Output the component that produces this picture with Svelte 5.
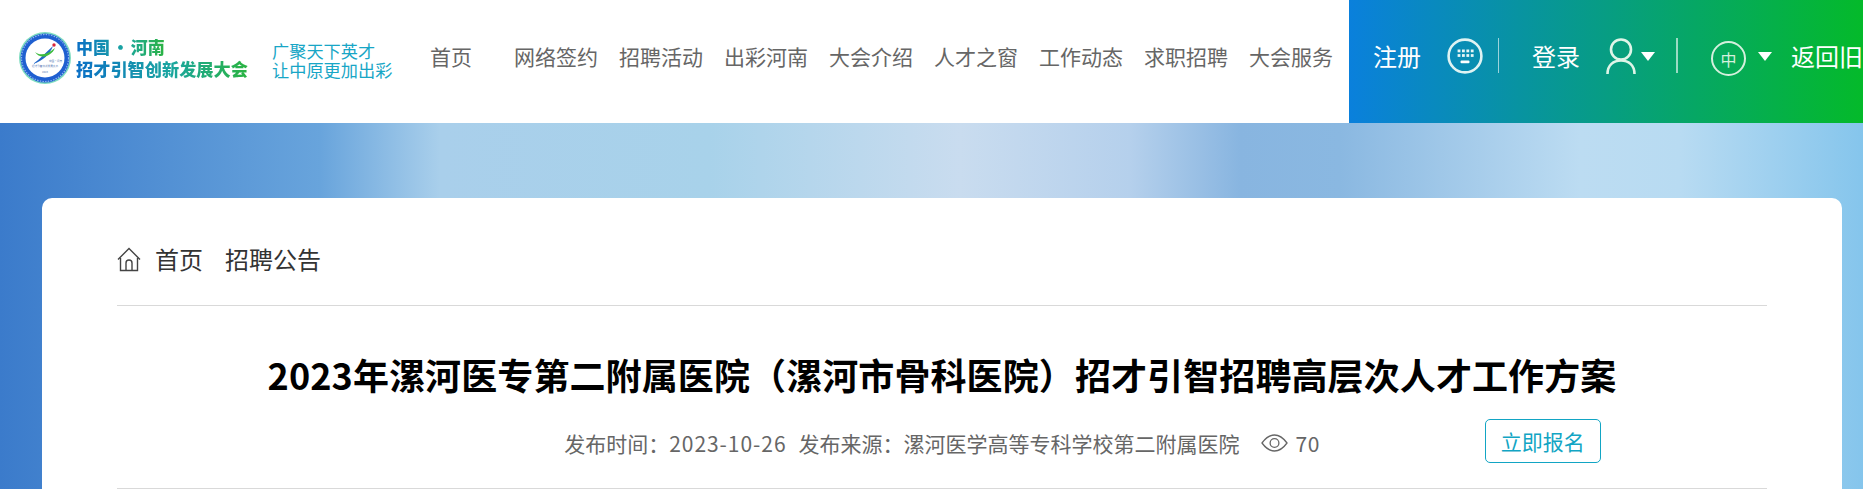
<script lang="ts">
  const navItems = ['网络签约', '招聘活动', '出彩河南', '大会介绍', '人才之窗', '工作动态', '求职招聘', '大会服务'];
  const keypadDots = [0, 1, 2, 3].flatMap((c) => [0, 1].map((r) => ({ x: 10.6 + c * 4.4, y: 11.5 + r * 4.6 })));
</script>

<div class="page">
  <header class="header">
    <a class="logo" href="#top">
      <svg class="emblem" viewBox="0 0 54 54" width="54" height="54" aria-hidden="true">
        <circle cx="27" cy="27" r="26" fill="#7fdcc0" />
        <circle cx="27" cy="27" r="24.5" fill="#1f5fd0" />
        <circle cx="27" cy="27" r="23.5" fill="none" stroke="#8fb4ee" stroke-width="1.2" stroke-dasharray="1.5 1.2" />
        <circle cx="27" cy="27" r="19.5" fill="#fff" />
        <path d="M15 33 C22 28 28 21 35 15 C32 23 25 30 15 33 Z" fill="#2368c9" />
        <path d="M17 21 C22 25 29 24 37 17 C33 26 22 29 17 21 Z" fill="#3dbb3f" />
        <circle cx="36" cy="14" r="1.7" fill="#d9263a" />
        <text x="31" y="31" class="tiny">中国·河南</text>
        <text x="27" y="36" class="tiny center">招才引智创新发展大会</text>
        <text x="27" y="42" class="tiny center">2023</text>
      </svg>
      <span class="logo-text">
        <span class="logo-line1">中国 · 河南</span>
        <span class="logo-line2">招才引智创新发展大会</span>
      </span>
    </a>

    <div class="slogan">
      <div>广聚天下英才</div>
      <div>让中原更加出彩</div>
    </div>

    <nav class="nav">
      <a class="home" href="#top">首页</a>
      {#each navItems as item}
        <a href="#top">{item}</a>
      {/each}
    </nav>

    <div class="account">
      <a class="reg" href="#top">注册</a>
      <svg class="icon-keypad" viewBox="0 0 36 36" width="36" height="36" aria-hidden="true">
        <circle cx="18" cy="18" r="16.4" fill="none" stroke="#dff3f3" stroke-width="2.6" />
        {#each keypadDots as d}
          <rect x={d.x} y={d.y} width="2.8" height="2.8" fill="#e6f6f6" />
        {/each}
        <rect x="13.5" y="22.5" width="9" height="2.8" rx="1" fill="#fff" />
      </svg>
      <span class="divider first"></span>
      <a class="login" href="#top">登录</a>
      <svg class="icon-user" viewBox="0 0 30 36" width="30" height="36" aria-hidden="true">
        <circle cx="15" cy="11.5" r="10" fill="none" stroke="#dff5e8" stroke-width="2.6" />
        <path d="M1.5 36 C1.5 27 7.5 22.5 15 22.5 C22.5 22.5 28.5 27 28.5 36" fill="none" stroke="#dff5e8" stroke-width="2.6" />
      </svg>
      <span class="caret"></span>
      <span class="divider second"></span>
      <span class="lang">中</span>
      <span class="caret lang-caret"></span>
      <a class="old" href="#top">返回旧版</a>
    </div>
  </header>

  <main class="card">
    <div class="crumbs">
      <svg class="icon-home" viewBox="0 0 24 25" width="24" height="25" aria-hidden="true">
        <path d="M1 12.5 L12 1.5 L23 12.5" fill="none" stroke="#444" stroke-width="1.4" />
        <path d="M3.5 11 V23.5 H20.5 V11" fill="none" stroke="#444" stroke-width="1.4" />
        <path d="M9 23.5 V16 A3 3 0 0 1 15 16 V23.5" fill="none" stroke="#444" stroke-width="1.4" />
      </svg>
      <a href="#top">首页</a>
      <a href="#top">招聘公告</a>
    </div>

    <div class="article-head">
      <h1>2023年漯河医专第二附属医院（漯河市骨科医院）招才引智招聘高层次人才工作方案</h1>
      <div class="meta-row">
        <div class="meta">
          <span>发布时间：<span class="num">2023-10-26</span></span>
          <span>发布来源：漯河医学高等专科学校第二附属医院</span>
          <span class="views">
            <svg viewBox="0 0 27 18" width="27" height="18" aria-hidden="true">
              <path d="M1 9 C5 3.5 9 1 13.5 1 C18 1 22 3.5 26 9 C22 14.5 18 17 13.5 17 C9 17 5 14.5 1 9 Z" fill="none" stroke="#666" stroke-width="1.3" />
              <circle cx="13.5" cy="9" r="4.4" fill="none" stroke="#666" stroke-width="1.3" />
            </svg>
            <span class="count">70</span>
          </span>
        </div>
        <a class="apply" href="#top">立即报名</a>
      </div>
    </div>
  </main>
</div>

<style>
  :global(body) {
    margin: 0;
    overflow: hidden;
  }

  .page {
    height: 489px;
    overflow: hidden;
    font-family: "Noto Sans CJK SC", "Noto Sans", sans-serif;
    background: linear-gradient(90deg, #3b7bcb 0, #68a4dc 320px, #a9cfeb 440px, #a8d2ea 710px, #c9dcef 960px, #b5d0ec 1130px, #88b5e0 1240px, #8ab8e1 1340px, #bcdcf2 1580px, #b8dbf2 1680px, #85c5ec 1863px) no-repeat;
  }

  a {
    color: inherit;
    text-decoration: none;
  }

  .header {
    display: flex;
    height: 123px;
    background: #fff;
  }

  .logo {
    display: flex;
    align-items: center;
    gap: 4px;
    margin-left: 18px;
    padding-bottom: 8px;
    width: 254px;
    flex-shrink: 0;
  }

  .emblem {
    flex-shrink: 0;
  }

  .tiny {
    font-size: 2.6px;
    fill: #4a6fb0;
  }

  .center {
    text-anchor: middle;
  }

  .logo-text {
    display: flex;
    flex-direction: column;
    gap: 3px;
    font-weight: 900;
  }

  .logo-text span {
    width: fit-content;
    background: linear-gradient(90deg, #0b6fc6, #1aa6a0 55%, #2bb341);
    background-clip: text;
    -webkit-background-clip: text;
    color: transparent;
  }

  .logo-line1 {
    font-size: 17px;
    line-height: 19px;
    word-spacing: -2px;
  }

  .logo-line2 {
    font-size: 17.2px;
    line-height: 20px;
  }

  .slogan {
    align-self: center;
    width: 158px;
    padding-bottom: 2px;
    flex-shrink: 0;
    font-size: 17.2px;
    line-height: 18.5px;
    color: #18a6c6;
  }

  .nav {
    display: flex;
    align-items: center;
    gap: 21px;
    padding-bottom: 12px;
    font-size: 21px;
    color: #666;
    white-space: nowrap;
    flex-shrink: 0;
  }

  .nav .home {
    margin-right: 21px;
  }

  .account {
    margin-left: auto;
    width: 514px;
    flex-shrink: 0;
    display: flex;
    align-items: center;
    padding: 0 0 12px 24px;
    box-sizing: border-box;
    overflow: hidden;
    font-size: 24px;
    color: #fff;
    white-space: nowrap;
    background: linear-gradient(90deg, #0a80dc, #04ba2a);
  }

  .icon-keypad {
    margin-left: 26px;
    flex-shrink: 0;
  }

  .divider {
    width: 1px;
    height: 35px;
    background: rgba(255, 255, 255, 0.6);
    flex-shrink: 0;
  }

  .divider.first {
    margin-left: 15px;
  }

  .login {
    margin-left: 33px;
  }

  .icon-user {
    margin-left: 26px;
    flex-shrink: 0;
  }

  .caret {
    width: 0;
    height: 0;
    margin: 1px 0 0 5px;
    border-left: 7.5px solid transparent;
    border-right: 7.5px solid transparent;
    border-top: 9px solid #fff;
    flex-shrink: 0;
  }

  .divider.second {
    margin-left: 21px;
    width: 2px;
  }

  .lang {
    display: flex;
    align-items: center;
    justify-content: center;
    box-sizing: border-box;
    width: 35px;
    height: 35px;
    margin: 6px 0 0 33px;
    border: 2.4px solid #d5f0dd;
    border-radius: 50%;
    font-size: 16px;
    color: #d5f0dd;
    flex-shrink: 0;
  }

  .caret.lang-caret {
    margin-left: 12px;
  }

  .old {
    margin-left: 19px;
  }

  .card {
    width: 1800px;
    box-sizing: border-box;
    margin: 75px 0 0 42px;
    padding: 0 75px;
    background: #fff;
    border-radius: 10px 10px 0 0;
  }

  .crumbs {
    display: flex;
    align-items: center;
    height: 94px;
    padding-top: 13px;
    border-bottom: 1px solid #d9d9d9;
    font-size: 24px;
    color: #333;
  }

  .crumbs a + a {
    margin-left: 22px;
  }

  .icon-home {
    margin: 3px 14px 0 0;
  }

  .article-head {
    padding: 43px 0 25px;
    border-bottom: 1px solid #d9d9d9;
  }

  h1 {
    margin: 0;
    font-size: 36px;
    line-height: 50px;
    letter-spacing: 0.1px;
    font-weight: 700;
    text-align: center;
    color: #000;
    white-space: nowrap;
  }

  .meta-row {
    display: grid;
    grid-template-columns: 1fr auto 1fr;
    align-items: center;
    height: 44px;
    margin-top: 20px;
  }

  .meta {
    grid-column: 2;
    display: flex;
    align-items: center;
    gap: 12px;
    padding-top: 3px;
    font-size: 21px;
    color: #666;
    white-space: nowrap;
  }

  .num {
    letter-spacing: 0.95px;
  }

  .count {
    letter-spacing: 0.5px;
  }

  .views {
    display: flex;
    align-items: center;
    gap: 8px;
    margin-left: 9px;
  }

  .apply {
    grid-column: 3;
    justify-self: start;
    margin-left: 165px;
    box-sizing: border-box;
    width: 116px;
    height: 44px;
    line-height: 42px;
    text-align: center;
    border: 1px solid #12a5c4;
    border-radius: 5px;
    font-size: 21px;
    color: #12a5c4;
  }
</style>
